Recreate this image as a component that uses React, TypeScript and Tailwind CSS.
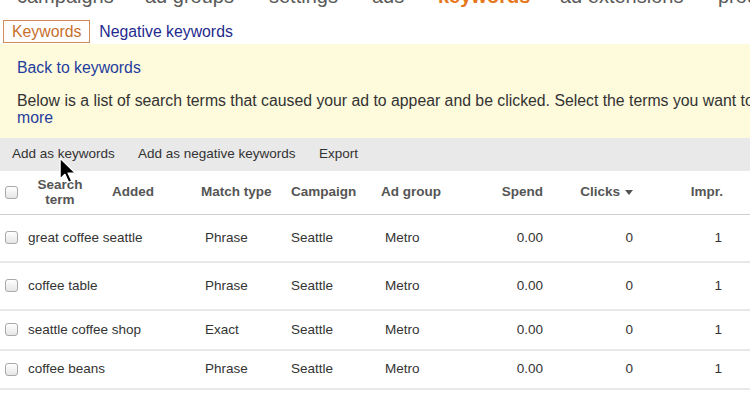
import React from "react";

const topTabs = [
  { label: "campaigns", w: "w-[128px]", active: false },
  { label: "ad groups", w: "w-[124px]", active: false },
  { label: "settings", w: "w-[103px]", active: false },
  { label: "ads", w: "w-[66px]", active: false },
  { label: "keywords", w: "w-[122px]", active: true },
  { label: "ad extensions", w: "w-[158px]", active: false },
  { label: "products", w: "w-[80px]", active: false },
];

const rows = [
  { term: "great coffee seattle", match: "Phrase", h: "h-[48px]" },
  { term: "coffee table", match: "Phrase", h: "h-[48px]" },
  { term: "seattle coffee shop", match: "Exact", h: "h-[40px]" },
  { term: "coffee beans", match: "Phrase", h: "h-[39px]" },
];

const grid =
  "grid grid-cols-[24px_72px_100px_90px_90px_90px_82px_112px_90px] items-center";

function Checkbox() {
  return (
    <span className="ml-[5px] block h-[13px] w-[13px] rounded-[3px] border border-[#a9a9a9] bg-gradient-to-b from-white to-[#e6e6e6]" />
  );
}

// mouse pointer sitting over the toolbar
function Cursor() {
  return (
    <svg
      className="pointer-events-none absolute left-[59px] top-[157px]"
      width="19"
      height="27"
      viewBox="0 0 17 24"
    >
      <path
        d="M1 1 L1 19.5 L5.3 15.4 L8.6 22.6 L11.4 21.4 L8.1 14.3 L14.6 14.3 Z"
        fill="#000"
        stroke="#fff"
        strokeWidth="1.1"
        strokeLinejoin="round"
      />
    </svg>
  );
}

export default function App() {
  return (
    <div className="relative h-[400px] w-[750px] overflow-hidden bg-white font-['Liberation_Sans',Arial,sans-serif] text-[#333]">
      {/* cut-off top navigation */}
      <div className="h-[8px] overflow-hidden">
        <div className="-mt-[14px] flex pl-[17px] text-[20px] leading-[20px] whitespace-nowrap">
          {topTabs.map((t) => (
            <span
              key={t.label}
              className={`${t.w} shrink-0 ${t.active ? "font-bold text-[#e5781c]" : "text-[#5a5a5a]"}`}
            >
              {t.label}
            </span>
          ))}
        </div>
      </div>

      {/* sub tabs */}
      <div className="mt-[12px] flex items-center gap-[9px] pl-[3px] text-[15.8px]">
        <span className="flex h-[23px] items-center border border-[#d08a56] px-[8px] text-[#c8702c]">
          Keywords
        </span>
        <span className="text-[#1f2a8e]">Negative keywords</span>
      </div>

      {/* info panel */}
      <div className="h-[94px] bg-[#fefadc] pl-[17px] pt-[15px] text-[15.8px] whitespace-nowrap">
        <div className="leading-[18px] text-[#1f3d9c]">Back to keywords</div>
        <div className="mt-[15px] leading-[17px] text-[#333]">
          Below is a list of search terms that caused your ad to appear and be clicked. Select the terms you want to
          add as keywords.
        </div>
        <div className="leading-[17px] text-[#1f3d9c]">more</div>
      </div>

      {/* toolbar */}
      <div className="flex h-[33px] items-center bg-[#e9e9e9] pl-[12px] text-[13.5px] text-[#333]">
        <span className="w-[126px]">Add as keywords</span>
        <span className="w-[181px]">Add as negative keywords</span>
        <span>Export</span>
      </div>

      {/* table header */}
      <div className={`${grid} h-[44px] border-b border-[#cfcfcf] text-[13.5px] font-bold text-[#555]`}>
        <Checkbox />
        <span className="text-center leading-[15px]">
          Search
          <br />
          term
        </span>
        <span className="pl-[16px]">Added</span>
        <span className="pl-[5px]">Match type</span>
        <span className="pl-[5px]">Campaign</span>
        <span className="pl-[5px]">Ad group</span>
        <span className="pr-[5px] text-right">Spend</span>
        <span className="flex items-center justify-end gap-[5px] pr-[27px]">
          Clicks
          <svg width="8" height="5" viewBox="0 0 8 5">
            <path d="M0 0 L8 0 L4 5 Z" fill="#555" />
          </svg>
        </span>
        <span className="pr-[27px] text-right">Impr.</span>
      </div>

      {/* rows */}
      {rows.map((r) => (
        <div
          key={r.term}
          className={`${grid} ${r.h} border-b-2 border-[#e8e8e8] text-[13.5px] text-[#333] whitespace-nowrap`}
        >
          <Checkbox />
          <span className="pl-[4px]">{r.term}</span>
          <span />
          <span className="pl-[9px]">{r.match}</span>
          <span className="pl-[5px]">Seattle</span>
          <span className="pl-[9px]">Metro</span>
          <span className="pr-[5px] text-right">0.00</span>
          <span className="pr-[27px] text-right">0</span>
          <span className="pr-[28px] text-right">1</span>
        </div>
      ))}

      <Cursor />
    </div>
  );
}
